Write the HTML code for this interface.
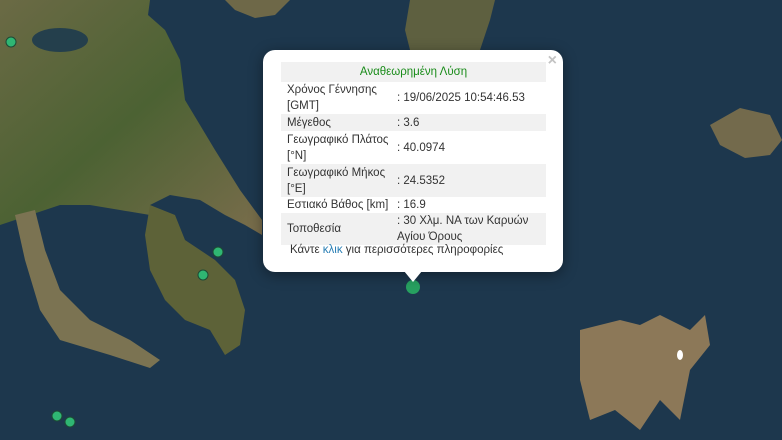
<!DOCTYPE html>
<html><head><meta charset="utf-8"><style>
body{margin:0;width:782px;height:440px;overflow:hidden;background:#1e3850;font-family:"Liberation Sans","Noto Sans CJK SC",sans-serif}
#map{position:absolute;left:0;top:0}
.pop{position:absolute;left:263px;top:50px;width:300px;height:222px;background:#fff;border-radius:12px;box-shadow:0 3px 14px rgba(0,0,0,.4)}
.tip{position:absolute;left:404px;top:271px;width:0;height:0;border-left:9px solid transparent;border-right:9px solid transparent;border-top:11px solid #fff}
.x{position:absolute;right:6px;top:2px;color:#c3c3c3;font-size:16px;font-weight:bold}
table{position:absolute;left:18px;top:12px;width:265px;border-collapse:collapse;table-layout:fixed;font-size:11.5px;color:#333;line-height:16px}
td{padding:0 0 0 6px;vertical-align:middle;white-space:nowrap;overflow:hidden}
td.v{padding-left:0}
tr.g{background:#f1f1f1}
th{font-weight:normal;color:#1a8c1a;background:#f1f1f1;height:18px;font-size:11.5px}
.f{position:absolute;left:27px;top:194px;font-size:11.5px;color:#333;white-space:nowrap}
.f span{color:#2a7fb5}
</style></head><body>
<svg id="map" width="782" height="440">
<defs><linearGradient id="lg" x1="0" y1="0" x2="1" y2="1"><stop offset="0" stop-color="#6b6a45"/><stop offset=".5" stop-color="#4c6233"/><stop offset="1" stop-color="#7a6d4c"/></linearGradient></defs>
<rect width="782" height="440" fill="#1d374d"/>
<path d="M0,0 L150,0 L148,15 L165,30 L180,60 L185,100 L200,125 L215,150 L240,190 L262,220 L262,235 L245,225 L225,215 L200,200 L170,195 L150,205 L150,215 L120,210 L90,205 L60,205 L30,215 L0,225 Z" fill="url(#lg)"/>
<path d="M15,215 L35,210 L45,250 L60,290 L90,320 L130,340 L160,360 L150,368 L110,355 L60,340 L40,310 L25,260 Z" fill="#7b7352"/>
<path d="M150,205 L175,215 L185,240 L215,260 L235,280 L245,310 L240,345 L225,355 L210,330 L185,320 L165,300 L150,270 L145,235 Z" fill="#5d6238"/>
<path d="M225,0 L290,0 L275,15 L255,18 L235,10 Z" fill="#6e6848"/>
<path d="M410,0 L495,0 L490,20 L480,50 L410,50 L405,30 Z" fill="#5e6040"/>
<ellipse cx="60" cy="40" rx="28" ry="12" fill="#243f4c"/>
<path d="M710,125 L740,108 L770,115 L782,140 L770,155 L745,158 L720,145 Z" fill="#736a4c"/>
<path d="M580,330 L620,320 L640,325 L660,315 L690,330 L705,315 L710,345 L690,370 L680,420 L660,400 L640,430 L615,410 L590,420 L580,380 Z" fill="#8c7858"/>
<ellipse cx="680" cy="355" rx="3" ry="5" fill="#fff"/>
<g fill="#2fb673" stroke="#1d4a35" stroke-width="1">
<circle cx="11" cy="42" r="5"/><circle cx="218" cy="252" r="5"/><circle cx="203" cy="275" r="5"/><circle cx="57" cy="416" r="5"/><circle cx="70" cy="422" r="5"/>
</g>
<circle cx="413" cy="287" r="7" fill="#27a060"/>
</svg>
<div class="pop">
<div class="x">×</div>
<table>
<colgroup><col style="width:116px"><col></colgroup>
<tr><th colspan="2">Αναθεωρημένη Λύση</th></tr>
<tr style="height:32px"><td>Χρόνος Γέννησης<br>[GMT]</td><td class="v">: 19/06/2025 10:54:46.53</td></tr>
<tr class="g" style="height:17px"><td>Μέγεθος</td><td class="v">: 3.6</td></tr>
<tr style="height:33px"><td>Γεωγραφικό Πλάτος<br>[°N]</td><td class="v">: 40.0974</td></tr>
<tr class="g" style="height:33px"><td>Γεωγραφικό Μήκος<br>[°E]</td><td class="v">: 24.5352</td></tr>
<tr style="height:16px"><td>Εστιακό Βάθος [km]</td><td class="v">: 16.9</td></tr>
<tr class="g" style="height:32px"><td>Τοποθεσία</td><td class="v">: 30 Χλμ. ΝΑ των Καρυών<br>Αγίου Όρους</td></tr>
</table>
<div class="f">Κάντε <span>κλικ</span> για περισσότερες πληροφορίες</div>
</div>
<div class="tip"></div>
</body></html>
